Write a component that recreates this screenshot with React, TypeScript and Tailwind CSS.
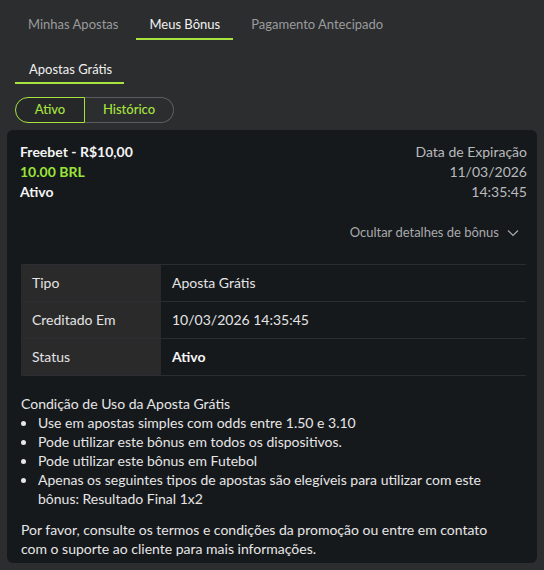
import React from 'react';

const font = { fontFamily: 'Lato, "Noto Sans", sans-serif' };

const tabs = ['Minhas Apostas', 'Meus Bônus', 'Pagamento Antecipado'];

const rows: { label: string; value: string; bold?: boolean }[] = [
  { label: 'Tipo', value: 'Aposta Grátis' },
  { label: 'Creditado Em', value: '10/03/2026 14:35:45' },
  { label: 'Status', value: 'Ativo', bold: true },
];

const conditions = [
  'Use em apostas simples com odds entre 1.50 e 3.10',
  'Pode utilizar este bônus em todos os dispositivos.',
  'Pode utilizar este bônus em Futebol',
  'Apenas os seguintes tipos de apostas são elegíveis para utilizar com este bônus: Resultado Final 1x2',
];

export default function App() {
  return (
    <div className="w-[544px] h-[570px] bg-[#2c2d2f] text-[#ececec] overflow-hidden" style={font}>
      {/* main tabs */}
      <div className="flex gap-[5px] pl-[15px] pt-[13px]">
        {tabs.map((t, i) => (
          <div
            key={t}
            className={`px-[13px] h-[27px] text-[13px] leading-[22px] border-b-2 ${
              i === 1 ? 'border-[#a6e33f] text-[#f2f2f2]' : 'border-transparent text-[#9a9b9d]'
            }`}
          >
            {t}
          </div>
        ))}
      </div>

      {/* sub tab */}
      <div className="flex pl-[15px] mt-[17px]">
        <div className="pl-[14px] pr-[12px] h-[27px] text-[13px] leading-[24px] text-[#f0f0f0] border-b-2 border-[#a6e33f]">
          Apostas Grátis
        </div>
      </div>

      {/* toggle */}
      <div className="flex ml-[15px] mt-[13px] h-[26px] w-[159px] text-[13px] font-medium text-[#a6e33f]">
        <div className="w-[70px] flex items-center justify-center rounded-l-full border border-[#a6e33f] bg-[#262729]">
          Ativo
        </div>
        <div className="flex-1 flex items-center justify-center rounded-r-full border border-l-0 border-[#5c5d60]">
          Histórico
        </div>
      </div>

      {/* card */}
      <div className="mx-[7px] mt-[7px] h-[433px] rounded-[6px] bg-[#16191c] pl-[13px] pr-[10px] pt-[12px]">
        <div className="flex justify-between text-[14px] leading-[20px]">
          <div className="font-bold">
            <div className="text-[#f4f4f4]">Freebet - R$10,00</div>
            <div className="text-[#9be33a]">10.00 BRL</div>
            <div className="text-[#f4f4f4]">Ativo</div>
          </div>
          <div className="text-right text-[#b9babc]">
            <div>Data de Expiração</div>
            <div>11/03/2026</div>
            <div>14:35:45</div>
          </div>
        </div>

        <div className="flex justify-end items-center gap-[8px] mt-[21px] pr-[8px] text-[13px] text-[#a9aaac]">
          <span>Ocultar detalhes de bônus</span>
          <svg width="12" height="8" viewBox="0 0 12 8" fill="none" stroke="#a9aaac" strokeWidth="1.2">
            <path d="M1 1.5 L6 6.5 L11 1.5" />
          </svg>
        </div>

        {/* details table */}
        <div className="mt-[21px] mx-[1px] border-t border-[#2a2d31] text-[14px]">
          {rows.map((r) => (
            <div key={r.label} className="flex h-[37px] border-b border-[#2a2d31]">
              <div className="w-[140px] bg-[#2a2a2b] flex items-center pl-[11px] text-[#e4e4e4]">{r.label}</div>
              <div className={`flex-1 flex items-center pl-[11px] ${r.bold ? 'font-bold text-[#f6f6f6]' : 'text-[#e4e4e4]'}`}>
                {r.value}
              </div>
            </div>
          ))}
        </div>

        {/* conditions */}
        <div className="mt-[18px] text-[14px] leading-[19px] text-[#e6e6e6] pl-[1px] pr-[20px]">
          <div>Condição de Uso da Aposta Grátis</div>
          <ul className="list-disc pl-[16px]">
            {conditions.map((c) => (
              <li key={c} className="pl-[1px]">
                {c}
              </li>
            ))}
          </ul>
          <p className="mt-[12px]">
            Por favor, consulte os termos e condições da promoção ou entre em contato com o suporte ao cliente para mais
            informações.
          </p>
        </div>
      </div>
    </div>
  );
}
